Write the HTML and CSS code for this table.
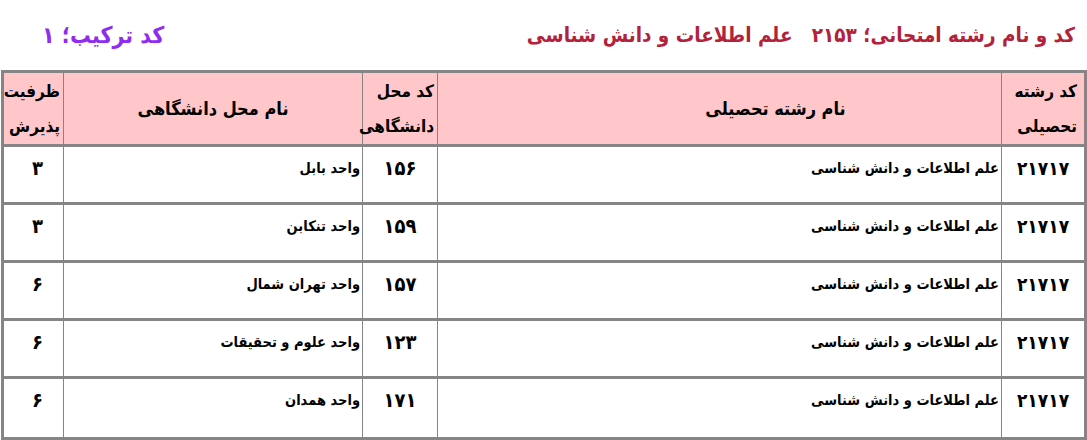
FILE: index.html
```html
<!DOCTYPE html>
<html lang="fa" dir="rtl">
<head>
<meta charset="utf-8">
<title>کد و نام رشته امتحانی</title>
<link rel="stylesheet" href="styles.css">
</head>
<body>
<div class="page">
  <div class="heading">
    <div class="exam-title">کد و نام رشته امتحانی؛ ۲۱۵۳&nbsp;&nbsp; علم اطلاعات و دانش شناسی</div>
    <div class="combo">کد ترکیب؛ ۱</div>
  </div>
  <table class="grid">
    <colgroup>
      <col class="c-code">
      <col class="c-field">
      <col class="c-uni-code">
      <col class="c-uni">
      <col class="c-cap">
    </colgroup>
    <thead>
      <tr>
        <th class="small first">کد رشته<br>تحصیلی</th>
        <th class="field-head">نام رشته تحصیلی</th>
        <th class="small">کد محل<br>دانشگاهی</th>
        <th>نام محل دانشگاهی</th>
        <th class="small">ظرفیت<br>پذیرش</th>
      </tr>
    </thead>
    <tbody>
      <tr>
        <td class="num code">۲۱۷۱۷</td>
        <td class="txt">علم اطلاعات و دانش شناسی</td>
        <td class="num">۱۵۶</td>
        <td class="txt">واحد بابل</td>
        <td class="num cap">۳</td>
      </tr>
      <tr>
        <td class="num code">۲۱۷۱۷</td>
        <td class="txt">علم اطلاعات و دانش شناسی</td>
        <td class="num">۱۵۹</td>
        <td class="txt">واحد تنکابن</td>
        <td class="num cap">۳</td>
      </tr>
      <tr>
        <td class="num code">۲۱۷۱۷</td>
        <td class="txt">علم اطلاعات و دانش شناسی</td>
        <td class="num">۱۵۷</td>
        <td class="txt">واحد تهران شمال</td>
        <td class="num cap">۶</td>
      </tr>
      <tr>
        <td class="num code">۲۱۷۱۷</td>
        <td class="txt">علم اطلاعات و دانش شناسی</td>
        <td class="num">۱۲۳</td>
        <td class="txt">واحد علوم و تحقیقات</td>
        <td class="num cap">۶</td>
      </tr>
      <tr>
        <td class="num code">۲۱۷۱۷</td>
        <td class="txt">علم اطلاعات و دانش شناسی</td>
        <td class="num">۱۷۱</td>
        <td class="txt">واحد همدان</td>
        <td class="num cap">۶</td>
      </tr>
    </tbody>
  </table>
</div>
</body>
</html>
```

FILE: styles.css
```css
html, body {
  margin: 0;
  padding: 0;
  background: #ffffff;
}

body {
  font-family: "DejaVu Sans Condensed", "DejaVu Sans", sans-serif;
  color: #000000;
}

.page {
  width: 1087px;
}

.heading {
  display: flex;
  justify-content: space-between;
  align-items: center;
  height: 70px;
  padding: 0 12px 0 42px;
  box-sizing: border-box;
}

.exam-title {
  color: #b3223a;
  font-weight: bold;
  font-size: 20.5px;
}

.combo {
  color: #8f2cf0;
  font-weight: bold;
  font-size: 23px;
}

.grid {
  width: 1086px;
  table-layout: fixed;
  border-collapse: separate;
  border-spacing: 0;
  border: 3px solid #858585;
}

.c-code { width: 83px; }
.c-field { width: 564px; }
.c-uni-code { width: 75px; }
.c-uni { width: 299px; }
.c-cap { width: 59px; }

.grid th,
.grid td {
  box-sizing: border-box;
  padding: 0;
  border-bottom: 3px solid #858585;
}

.grid th:not(:last-child),
.grid td:not(:last-child) {
  border-left: 1px solid #858585;
}

.grid tbody tr:last-child td {
  border-bottom: none;
}

.grid th {
  background: #ffc7ca;
  height: 74px;
  font-size: 18px;
  font-weight: bold;
  line-height: 35px;
  text-align: center;
  vertical-align: middle;
}

.grid th.field-head {
  padding-left: 112px;
}

.grid th.small {
  font-size: 17px;
  text-align: right;
  padding-right: 3px;
}

.grid th.small.first {
  padding-right: 7px;
}

.grid td {
  height: 58px;
  vertical-align: top;
  padding-top: 10px;
  line-height: 22px;
  font-weight: bold;
}

.grid td.txt {
  text-align: right;
  padding-right: 2px;
  font-size: 14.5px;
}

.grid td.num {
  text-align: center;
  font-size: 20px;
}

.grid td.code {
  font-size: 19px;
  letter-spacing: 1px;
}

.grid td.cap {
  padding-left: 8px;
}
```
